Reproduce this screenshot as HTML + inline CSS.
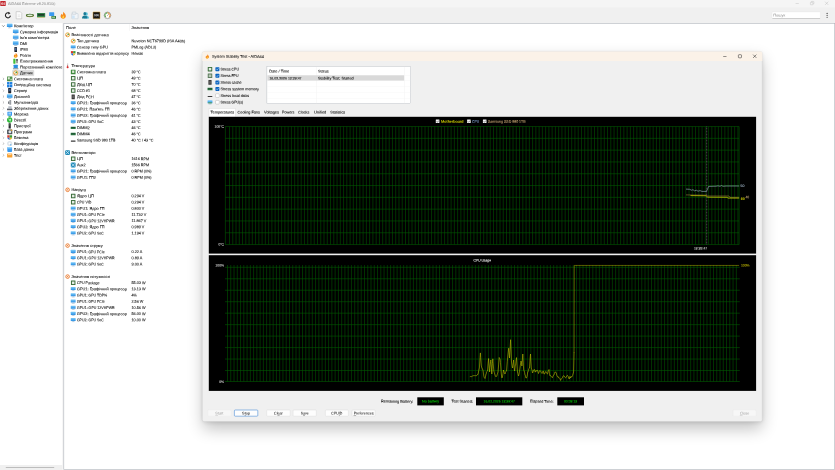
<!DOCTYPE html>
<html lang="uk"><head><meta charset="utf-8"><title>AIDA64 Extreme</title>
<style>
html,body{margin:0;padding:0;background:#fff}
body{width:835px;height:470px;position:relative;overflow:hidden;font-family:"Liberation Sans",sans-serif}
svg{position:absolute;left:0;top:0;display:block;will-change:transform}
#shadow{position:absolute;left:203px;top:52px;width:559px;height:369px;border-radius:2px;background:#f0f0f0;box-shadow:0 7.5px 16px rgba(0,0,0,0.24),0 1px 5px rgba(0,0,0,0.13)}
</style></head><body>
<svg width="835" height="470" viewBox="0 0 835 470" font-family="Liberation Sans, sans-serif">
<defs><linearGradient id="gm" x1="0" y1="0" x2="0" y2="1"><stop offset="0" stop-color="#7ccaf8"/><stop offset="1" stop-color="#2a8fe4"/></linearGradient><clipPath id="ctree"><rect x="0" y="23.2" width="62.4" height="442"/></clipPath></defs>
<rect x="0.00" y="0.00" width="835.00" height="7.20" fill="#f5f5f5"/>
<rect x="0.00" y="7.20" width="835.00" height="16.00" fill="#f0f0f0"/>
<rect x="0.30" y="1.00" width="5.40" height="5.10" fill="#c2262c" rx="0.4"/>
<text x="3.00" y="4.74" font-size="3.4" fill="#fff" text-anchor="middle" font-weight="bold" letter-spacing="-0.2" transform="rotate(0.1 3.00 4.74)">64</text>
<text x="8.00" y="5.06" font-size="3.9" fill="#8e8e8e" stroke="#8e8e8e" stroke-width="0.03" textLength="47.32" lengthAdjust="spacingAndGlyphs" transform="rotate(0.1 8.00 5.06)">AIDA64 Extreme v8.20.8100</text>
<rect x="795.60" y="3.25" width="3.20" height="0.38" fill="#b4b4b4"/>
<rect x="810.40" y="2.30" width="2.50" height="2.50" fill="none" rx="0.5" stroke="#b4b4b4" stroke-width="0.38"/>
<path d="M811.4 2.3V1.9Q811.4 1.4 811.9 1.4H813.3Q813.9 1.4 813.9 2.0V3.3Q813.9 3.8 813.4 3.8H812.9" fill="none" stroke="#b4b4b4" stroke-width="0.38"/>
<path d="M825.1 1.7L828.3 4.9M828.3 1.7L825.1 4.9" fill="none" stroke="#b4b4b4" stroke-width="0.4"/>
<path d="M10.40 15.65 A2.5 2.5 0 1 1 8.90 13.05" fill="none" stroke="#222" stroke-width="1.05"/>
<path d="M8.40 11.75 L10.50 13.15 L8.30 14.45Z" fill="#222"/>
<path d="M16.15 11.65H20.15L21.75 13.25V18.85H16.15Z" fill="#fbfbfb" stroke="#b0b0b0" stroke-width="0.5"/>
<rect x="17.65" y="14.75" width="2.60" height="0.45" fill="#cfcfcf"/>
<rect x="17.65" y="15.95" width="2.60" height="0.45" fill="#cfcfcf"/>
<ellipse cx="29.90" cy="15.60" rx="3.95" ry="1.55" fill="#c8a040"/>
<ellipse cx="29.90" cy="15.35" rx="3.95" ry="1.55" fill="#3a6a30"/>
<ellipse cx="29.90" cy="15.35" rx="2.90" ry="0.85" fill="#e4ecd4"/>
<rect x="37.00" y="12.95" width="8.20" height="4.40" fill="#3a8a50" rx="0.3"/>
<rect x="37.80" y="13.85" width="6.60" height="1.90" fill="#1d3d28"/>
<rect x="37.40" y="17.35" width="7.40" height="0.60" fill="#c8b060"/>
<rect x="49.20" y="12.15" width="5.00" height="3.90" fill="#3a9af0" rx="0.4"/>
<rect x="51.40" y="15.95" width="4.60" height="2.90" fill="#2f6f3a" rx="0.3"/>
<rect x="52.10" y="16.55" width="2.90" height="1.50" fill="#8fc890"/>
<g transform="translate(59.50 11.45) scale(0.740)"><path d="M5 0.3 C6.5 2.5 8.8 3.6 8.6 6.5 C8.5 8.6 6.8 9.8 5 9.8 C3 9.8 1.3 8.5 1.4 6.3 C1.5 4.8 2.5 4.2 2.9 3 C3.6 3.8 3.8 4.4 4 5 C4.8 3.6 5.2 2 5 0.3Z" fill="#f58a1f"/><path d="M5 5.2 C6 6.3 6.6 7.2 6.3 8.3 C6.1 9.2 5.5 9.6 5 9.6 C4.3 9.6 3.7 9.1 3.7 8.2 C3.7 7 4.6 6.5 5 5.2Z" fill="#ffd23c"/></g>
<rect x="71.70" y="13.55" width="6.40" height="5.20" fill="#f2f5f8" rx="0.4" stroke="#b4c0cc" stroke-width="0.4"/>
<rect x="72.10" y="15.55" width="2.60" height="2.80" fill="#cfe4f6"/>
<rect x="72.30" y="12.05" width="3.60" height="2.20" fill="#eef1f4" rx="0.2" stroke="#b0bac4" stroke-width="0.4"/>
<ellipse cx="86.30" cy="14.05" rx="1.50" ry="1.70" fill="#5ac0d8"/>
<path d="M83.80 18.55Q83.80 15.75 86.40 15.75Q89.00 15.75 89.00 18.55Z" fill="#5ac0d8"/>
<ellipse cx="84.80" cy="13.65" rx="1.40" ry="1.60" fill="#1a7a94"/>
<path d="M82.00 18.55Q82.00 15.45 84.80 15.45Q87.40 15.45 87.40 18.55Z" fill="#1a7a94"/>
<rect x="93.00" y="11.95" width="7.00" height="6.80" fill="#141414" rx="0.3" stroke="#d8a23a" stroke-width="0.5"/>
<text x="96.50" y="16.36" font-size="3.0" fill="#f4f4f4" text-anchor="middle" font-weight="bold" transform="rotate(0.1 96.50 16.36)">000</text>
<ellipse cx="107.50" cy="15.35" rx="3.30" ry="3.30" fill="#fffefa" stroke="#4a4a4a" stroke-width="0.45"/>
<path d="M105.80 17.25A2.55 2.55 0 0 1 107.50 12.80" fill="none" stroke="#3fa03a" stroke-width="1.0"/>
<path d="M107.50 12.80A2.55 2.55 0 0 1 109.20 17.25" fill="none" stroke="#e8862a" stroke-width="1.0"/>
<path d="M107.30 15.75L108.80 14.25" fill="none" stroke="#444" stroke-width="0.5"/>
<rect x="772.10" y="11.90" width="48.30" height="6.60" fill="#fff" rx="0.5" stroke="#e4e4e4" stroke-width="0.3"/>
<rect x="772.40" y="18.20" width="47.70" height="0.40" fill="#9a9a9a"/>
<text x="773.20" y="16.51" font-size="3.9" fill="#8a8a8a" textLength="12.18" lengthAdjust="spacingAndGlyphs" transform="rotate(0.1 773.20 16.51)">Пошук</text>
<ellipse cx="827.10" cy="13.40" rx="0.55" ry="0.55" fill="#222"/>
<ellipse cx="827.10" cy="15.35" rx="0.55" ry="0.55" fill="#222"/>
<ellipse cx="827.10" cy="17.30" rx="0.55" ry="0.55" fill="#222"/>
<rect x="0.00" y="23.20" width="62.40" height="446.80" fill="#fff"/>
<rect x="62.40" y="23.20" width="1.20" height="446.80" fill="#f0f0f0"/>
<rect x="63.80" y="23.50" width="770.90" height="446.00" fill="#fff" stroke="#aeb2ba" stroke-width="0.6"/>
<rect x="0.00" y="465.00" width="62.40" height="5.00" fill="#f0f0f0"/>
<rect x="5.70" y="467.15" width="48.60" height="0.70" fill="#8a8a8a" rx="0.35"/>
<g clip-path="url(#ctree)">
<path d="M2.30 25.45L3.40 26.55L4.50 25.45" fill="none" stroke="#333" stroke-width="0.6"/>
<rect x="6.90" y="23.61" width="5.60" height="3.47" fill="url(#gm)" rx="0.3"/>
<rect x="9.14" y="27.08" width="1.12" height="0.67" fill="#9ab8d0"/>
<rect x="8.02" y="27.64" width="3.36" height="0.56" fill="#8fb0cc"/>
<text x="13.90" y="27.26" font-size="3.9" fill="#1a1a1a" stroke="#1a1a1a" stroke-width="0.09" textLength="19.75" lengthAdjust="spacingAndGlyphs" transform="rotate(0.1 13.90 27.26)">Комп'ютер</text>
<rect x="12.90" y="29.50" width="5.60" height="3.47" fill="url(#gm)" rx="0.3"/>
<rect x="15.14" y="32.97" width="1.12" height="0.67" fill="#9ab8d0"/>
<rect x="14.02" y="33.53" width="3.36" height="0.56" fill="#8fb0cc"/>
<text x="20.00" y="33.14" font-size="3.9" fill="#1a1a1a" stroke="#1a1a1a" stroke-width="0.09" textLength="38.16" lengthAdjust="spacingAndGlyphs" transform="rotate(0.1 20.00 33.14)">Сумарна інформація</text>
<rect x="12.90" y="35.38" width="5.60" height="3.47" fill="url(#gm)" rx="0.3"/>
<rect x="15.14" y="38.85" width="1.12" height="0.67" fill="#9ab8d0"/>
<rect x="14.02" y="39.41" width="3.36" height="0.56" fill="#8fb0cc"/>
<text x="20.00" y="39.03" font-size="3.9" fill="#1a1a1a" stroke="#1a1a1a" stroke-width="0.09" textLength="29.30" lengthAdjust="spacingAndGlyphs" transform="rotate(0.1 20.00 39.03)">Ім'я комп'ютера</text>
<rect x="12.90" y="41.26" width="5.60" height="3.47" fill="url(#gm)" rx="0.3"/>
<rect x="15.14" y="44.74" width="1.12" height="0.67" fill="#9ab8d0"/>
<rect x="14.02" y="45.30" width="3.36" height="0.56" fill="#8fb0cc"/>
<text x="20.00" y="44.91" font-size="3.9" fill="#1a1a1a" stroke="#1a1a1a" stroke-width="0.09" textLength="7.27" lengthAdjust="spacingAndGlyphs" transform="rotate(0.1 20.00 44.91)">DMI</text>
<rect x="14.40" y="46.89" width="2.60" height="5.00" fill="#20242c" rx="0.5"/>
<rect x="14.85" y="47.69" width="1.70" height="2.80" fill="#4a6a98"/>
<text x="20.00" y="50.80" font-size="3.9" fill="#1a1a1a" stroke="#1a1a1a" stroke-width="0.09" textLength="7.77" lengthAdjust="spacingAndGlyphs" transform="rotate(0.1 20.00 50.80)">IPMI</text>
<g transform="translate(13.10 52.67) scale(0.520)"><path d="M5 0.3 C6.5 2.5 8.8 3.6 8.6 6.5 C8.5 8.6 6.8 9.8 5 9.8 C3 9.8 1.3 8.5 1.4 6.3 C1.5 4.8 2.5 4.2 2.9 3 C3.6 3.8 3.8 4.4 4 5 C4.8 3.6 5.2 2 5 0.3Z" fill="#f58a1f"/><path d="M5 5.2 C6 6.3 6.6 7.2 6.3 8.3 C6.1 9.2 5.5 9.6 5 9.6 C4.3 9.6 3.7 9.1 3.7 8.2 C3.7 7 4.6 6.5 5 5.2Z" fill="#ffd23c"/></g>
<text x="20.00" y="56.68" font-size="3.9" fill="#1a1a1a" stroke="#1a1a1a" stroke-width="0.09" textLength="11.05" lengthAdjust="spacingAndGlyphs" transform="rotate(0.1 20.00 56.68)">Розгін</text>
<rect x="13.30" y="58.66" width="2.20" height="5.00" fill="#3fbe3a" rx="0.3"/>
<rect x="16.55" y="59.46" width="0.90" height="3.80" fill="#333"/>
<ellipse cx="17.00" cy="59.86" rx="0.80" ry="0.90" fill="#333"/>
<text x="20.00" y="62.57" font-size="3.9" fill="#1a1a1a" stroke="#1a1a1a" stroke-width="0.09" textLength="33.02" lengthAdjust="spacingAndGlyphs" transform="rotate(0.1 20.00 62.57)">Електроживлення</text>
<rect x="13.60" y="64.85" width="4.20" height="3.20" fill="#2b8fe0" rx="0.3"/>
<rect x="12.90" y="68.34" width="5.60" height="0.80" fill="#7a8a98" rx="0.3"/>
<text x="20.00" y="68.45" font-size="3.9" fill="#1a1a1a" stroke="#1a1a1a" stroke-width="0.09" textLength="44.91" lengthAdjust="spacingAndGlyphs" transform="rotate(0.1 20.00 68.45)">Портативний комп'ютер</text>
<rect x="12.50" y="70.23" width="21.40" height="5.50" fill="#dcdcdc" rx="0.4" stroke="#c6c6c6" stroke-width="0.3"/>
<ellipse cx="15.70" cy="72.93" rx="2.10" ry="2.10" fill="#fffdf6" stroke="#e89a20" stroke-width="0.8"/>
<ellipse cx="16.30" cy="72.43" rx="0.85" ry="0.85" fill="#4a9a3a"/>
<ellipse cx="14.90" cy="73.73" rx="0.60" ry="0.60" fill="#d85a2a"/>
<text x="20.00" y="74.34" font-size="3.9" fill="#1a1a1a" stroke="#1a1a1a" stroke-width="0.09" textLength="12.85" lengthAdjust="spacingAndGlyphs" transform="rotate(0.1 20.00 74.34)">Датчик</text>
<path d="M2.90 77.82L4.00 78.92L2.90 80.02" fill="none" stroke="#8c8c8c" stroke-width="0.55"/>
<rect x="7.00" y="76.42" width="5.40" height="4.80" fill="#4f8f4a" rx="0.3"/>
<rect x="7.80" y="77.22" width="2.00" height="2.20" fill="#e0ecd8"/>
<rect x="10.40" y="78.82" width="1.40" height="1.60" fill="#c8dcc0"/>
<text x="13.90" y="80.22" font-size="3.9" fill="#1a1a1a" stroke="#1a1a1a" stroke-width="0.09" textLength="29.00" lengthAdjust="spacingAndGlyphs" transform="rotate(0.1 13.90 80.22)">Системна плата</text>
<path d="M2.90 83.70L4.00 84.80L2.90 85.90" fill="none" stroke="#8c8c8c" stroke-width="0.55"/>
<rect x="7.05" y="82.05" width="2.50" height="2.50" fill="#1f7fe0"/>
<rect x="7.05" y="84.85" width="2.50" height="2.50" fill="#1f7fe0"/>
<rect x="9.85" y="82.05" width="2.50" height="2.50" fill="#1f7fe0"/>
<rect x="9.85" y="84.85" width="2.50" height="2.50" fill="#1f7fe0"/>
<text x="13.90" y="86.11" font-size="3.9" fill="#1a1a1a" stroke="#1a1a1a" stroke-width="0.09" textLength="36.97" lengthAdjust="spacingAndGlyphs" transform="rotate(0.1 13.90 86.11)">Операційна система</text>
<path d="M2.90 89.59L4.00 90.69L2.90 91.79" fill="none" stroke="#8c8c8c" stroke-width="0.55"/>
<rect x="8.20" y="87.99" width="3.00" height="5.20" fill="#20242c" rx="0.5"/>
<rect x="8.75" y="88.89" width="1.90" height="2.40" fill="#3a5a8a"/>
<text x="13.90" y="91.99" font-size="3.9" fill="#1a1a1a" stroke="#1a1a1a" stroke-width="0.09" textLength="13.25" lengthAdjust="spacingAndGlyphs" transform="rotate(0.1 13.90 91.99)">Сервер</text>
<path d="M2.90 95.47L4.00 96.57L2.90 97.67" fill="none" stroke="#8c8c8c" stroke-width="0.55"/>
<rect x="6.90" y="94.23" width="5.60" height="3.47" fill="url(#gm)" rx="0.3"/>
<rect x="9.14" y="97.70" width="1.12" height="0.67" fill="#9ab8d0"/>
<rect x="8.02" y="98.26" width="3.36" height="0.56" fill="#8fb0cc"/>
<text x="13.90" y="97.88" font-size="3.9" fill="#1a1a1a" stroke="#1a1a1a" stroke-width="0.09" textLength="15.80" lengthAdjust="spacingAndGlyphs" transform="rotate(0.1 13.90 97.88)">Дисплей</text>
<path d="M2.90 101.36L4.00 102.46L2.90 103.56" fill="none" stroke="#8c8c8c" stroke-width="0.55"/>
<rect x="9.40" y="99.96" width="1.80" height="4.80" fill="#9a9ea4" rx="0.3"/>
<rect x="8.10" y="101.46" width="1.20" height="2.40" fill="#6a6e74"/>
<text x="13.90" y="103.76" font-size="3.9" fill="#1a1a1a" stroke="#1a1a1a" stroke-width="0.09" textLength="24.24" lengthAdjust="spacingAndGlyphs" transform="rotate(0.1 13.90 103.76)">Мультимедіа</text>
<path d="M2.90 107.24L4.00 108.34L2.90 109.44" fill="none" stroke="#8c8c8c" stroke-width="0.55"/>
<rect x="7.00" y="108.54" width="5.40" height="1.80" fill="#5a5f68" rx="0.4"/>
<rect x="8.30" y="106.14" width="3.40" height="2.40" fill="#b8bec6" rx="0.3"/>
<text x="13.90" y="109.65" font-size="3.9" fill="#1a1a1a" stroke="#1a1a1a" stroke-width="0.09" textLength="34.49" lengthAdjust="spacingAndGlyphs" transform="rotate(0.1 13.90 109.65)">Збереження даних</text>
<path d="M2.90 113.13L4.00 114.23L2.90 115.33" fill="none" stroke="#8c8c8c" stroke-width="0.55"/>
<rect x="7.40" y="111.63" width="4.60" height="4.00" fill="#3a9af0" rx="0.3"/>
<rect x="8.40" y="112.53" width="2.60" height="2.00" fill="#9fd0f8"/>
<rect x="8.50" y="115.88" width="2.40" height="0.90" fill="#3aa84a"/>
<text x="13.90" y="115.53" font-size="3.9" fill="#1a1a1a" stroke="#1a1a1a" stroke-width="0.09" textLength="14.60" lengthAdjust="spacingAndGlyphs" transform="rotate(0.1 13.90 115.53)">Мережа</text>
<path d="M2.90 119.01L4.00 120.11L2.90 121.21" fill="none" stroke="#8c8c8c" stroke-width="0.55"/>
<ellipse cx="9.70" cy="120.01" rx="2.70" ry="2.70" fill="#2fb83a"/>
<path d="M8.50 119.01L10.90 121.21M10.90 119.01L9.70 120.11" fill="none" stroke="#f0fff0" stroke-width="0.9"/>
<text x="13.90" y="121.42" font-size="3.9" fill="#1a1a1a" stroke="#1a1a1a" stroke-width="0.09" textLength="12.49" lengthAdjust="spacingAndGlyphs" transform="rotate(0.1 13.90 121.42)">DirectX</text>
<path d="M2.90 124.90L4.00 126.00L2.90 127.10" fill="none" stroke="#8c8c8c" stroke-width="0.55"/>
<rect x="8.60" y="123.30" width="2.20" height="5.20" fill="#2a2a30" rx="0.3"/>
<rect x="9.20" y="124.40" width="1.00" height="1.00" fill="#5a9a5a"/>
<text x="13.90" y="127.30" font-size="3.9" fill="#1a1a1a" stroke="#1a1a1a" stroke-width="0.09" textLength="16.72" lengthAdjust="spacingAndGlyphs" transform="rotate(0.1 13.90 127.30)">Пристрої</text>
<path d="M2.90 130.78L4.00 131.88L2.90 132.98" fill="none" stroke="#8c8c8c" stroke-width="0.55"/>
<rect x="7.10" y="129.38" width="5.20" height="4.80" fill="#4a5058" rx="0.5"/>
<ellipse cx="9.90" cy="131.78" rx="1.50" ry="1.50" fill="#e0e4e8"/>
<rect x="10.80" y="129.48" width="1.40" height="1.40" fill="#e8a030"/>
<text x="13.90" y="133.19" font-size="3.9" fill="#1a1a1a" stroke="#1a1a1a" stroke-width="0.09" textLength="18.39" lengthAdjust="spacingAndGlyphs" transform="rotate(0.1 13.90 133.19)">Програми</text>
<path d="M2.90 136.67L4.00 137.77L2.90 138.87" fill="none" stroke="#8c8c8c" stroke-width="0.55"/>
<path d="M7.30 135.27H9.70V137.67H7.30Z" fill="#d83a2a"/>
<path d="M9.70 135.27H12.10V137.67H9.70Z" fill="#3a9a3a"/>
<path d="M7.30 137.67H9.70V140.07Q7.30 139.11 7.30 137.67Z" fill="#2a6ad8"/>
<path d="M9.70 137.67H12.10Q12.10 139.11 9.70 140.07Z" fill="#e8b82a"/>
<text x="13.90" y="139.07" font-size="3.9" fill="#1a1a1a" stroke="#1a1a1a" stroke-width="0.09" textLength="14.64" lengthAdjust="spacingAndGlyphs" transform="rotate(0.1 13.90 139.07)">Безпека</text>
<path d="M2.90 142.55L4.00 143.65L2.90 144.75" fill="none" stroke="#8c8c8c" stroke-width="0.55"/>
<ellipse cx="9.70" cy="143.55" rx="2.60" ry="2.60" fill="#dde4ea"/>
<ellipse cx="9.70" cy="143.55" rx="1.10" ry="1.10" fill="#fff"/>
<ellipse cx="10.70" cy="144.75" rx="0.90" ry="0.90" fill="#8fc0e8"/>
<text x="13.90" y="144.96" font-size="3.9" fill="#1a1a1a" stroke="#1a1a1a" stroke-width="0.09" textLength="24.28" lengthAdjust="spacingAndGlyphs" transform="rotate(0.1 13.90 144.96)">Конфігурація</text>
<path d="M2.90 148.44L4.00 149.54L2.90 150.64" fill="none" stroke="#8c8c8c" stroke-width="0.55"/>
<rect x="7.30" y="146.94" width="4.80" height="5.00" fill="#3a9af0" rx="0.9"/>
<rect x="7.30" y="147.04" width="4.80" height="1.40" fill="#8fd0fa" rx="0.7"/>
<text x="13.90" y="150.84" font-size="3.9" fill="#1a1a1a" stroke="#1a1a1a" stroke-width="0.09" textLength="20.31" lengthAdjust="spacingAndGlyphs" transform="rotate(0.1 13.90 150.84)">База даних</text>
<path d="M2.90 154.32L4.00 155.42L2.90 156.52" fill="none" stroke="#8c8c8c" stroke-width="0.55"/>
<rect x="7.10" y="153.52" width="5.20" height="4.00" fill="#f8a030" rx="0.5"/>
<rect x="8.00" y="154.37" width="3.40" height="0.70" fill="#fff0d8"/>
<text x="13.90" y="156.73" font-size="3.9" fill="#1a1a1a" stroke="#1a1a1a" stroke-width="0.09" textLength="7.76" lengthAdjust="spacingAndGlyphs" transform="rotate(0.1 13.90 156.73)">Тест</text>
</g>
<text x="66.10" y="28.91" font-size="3.9" fill="#1a1a1a" stroke="#1a1a1a" stroke-width="0.09" textLength="9.66" lengthAdjust="spacingAndGlyphs" transform="rotate(0.1 66.10 28.91)">Поле</text>
<text x="131.60" y="28.91" font-size="3.9" fill="#1a1a1a" stroke="#1a1a1a" stroke-width="0.09" textLength="17.63" lengthAdjust="spacingAndGlyphs" transform="rotate(0.1 131.60 28.91)">Значення</text>
<rect x="129.60" y="24.20" width="0.30" height="6.60" fill="#e4e4e4"/>
<ellipse cx="67.60" cy="34.80" rx="2.00" ry="2.00" fill="#fffdf6" stroke="#e89a20" stroke-width="0.8"/>
<ellipse cx="68.18" cy="34.32" rx="0.82" ry="0.82" fill="#4a9a3a"/>
<ellipse cx="66.83" cy="35.57" rx="0.58" ry="0.58" fill="#d85a2a"/>
<text x="71.40" y="36.11" font-size="3.9" fill="#1a1a1a" stroke="#1a1a1a" stroke-width="0.09" textLength="37.17" lengthAdjust="spacingAndGlyphs" transform="rotate(0.1 71.40 36.11)">Властивості датчика</text>
<ellipse cx="73.20" cy="41.00" rx="2.00" ry="2.00" fill="#fffdf6" stroke="#e89a20" stroke-width="0.8"/>
<ellipse cx="73.78" cy="40.52" rx="0.82" ry="0.82" fill="#4a9a3a"/>
<ellipse cx="72.43" cy="41.77" rx="0.58" ry="0.58" fill="#d85a2a"/>
<text x="76.90" y="42.31" font-size="3.9" fill="#1a1a1a" stroke="#1a1a1a" stroke-width="0.09" textLength="22.06" lengthAdjust="spacingAndGlyphs" transform="rotate(0.1 76.90 42.31)">Тип датчика</text>
<text x="131.50" y="42.31" font-size="3.9" fill="#1a1a1a" stroke="#1a1a1a" stroke-width="0.09" textLength="53.72" lengthAdjust="spacingAndGlyphs" transform="rotate(0.1 131.50 42.31)">Nuvoton NCT6799D  (ISA A40h)</text>
<rect x="70.75" y="45.24" width="4.90" height="3.04" fill="url(#gm)" rx="0.3"/>
<rect x="72.71" y="48.28" width="0.98" height="0.59" fill="#9ab8d0"/>
<rect x="71.73" y="48.77" width="2.94" height="0.49" fill="#8fb0cc"/>
<text x="76.90" y="48.51" font-size="3.9" fill="#1a1a1a" stroke="#1a1a1a" stroke-width="0.09" textLength="31.04" lengthAdjust="spacingAndGlyphs" transform="rotate(0.1 76.90 48.51)">Сенсор типу GPU</text>
<text x="131.50" y="48.51" font-size="3.9" fill="#1a1a1a" stroke="#1a1a1a" stroke-width="0.09" textLength="24.72" lengthAdjust="spacingAndGlyphs" transform="rotate(0.1 131.50 48.51)">PMLog  (ADL2)</text>
<path d="M70.90 51.10H73.20V53.40H70.90Z" fill="#d83a2a"/>
<path d="M73.20 51.10H75.50V53.40H73.20Z" fill="#3a9a3a"/>
<path d="M70.90 53.40H73.20V55.70Q70.90 54.78 70.90 53.40Z" fill="#2a6ad8"/>
<path d="M73.20 53.40H75.50Q75.50 54.78 73.20 55.70Z" fill="#e8b82a"/>
<text x="76.90" y="54.71" font-size="3.9" fill="#1a1a1a" stroke="#1a1a1a" stroke-width="0.09" textLength="52.03" lengthAdjust="spacingAndGlyphs" transform="rotate(0.1 76.90 54.71)">Виявлено відкриття корпусу</text>
<text x="131.50" y="54.71" font-size="3.9" fill="#1a1a1a" stroke="#1a1a1a" stroke-width="0.09" textLength="11.41" lengthAdjust="spacingAndGlyphs" transform="rotate(0.1 131.50 54.71)">Немає</text>
<rect x="66.95" y="63.20" width="1.30" height="4.20" fill="#d0d0d0" rx="0.6"/>
<ellipse cx="67.60" cy="67.30" rx="1.00" ry="1.00" fill="#d82a2a"/>
<rect x="67.35" y="65.10" width="0.50" height="2.00" fill="#d82a2a"/>
<text x="71.40" y="67.11" font-size="3.9" fill="#1a1a1a" stroke="#1a1a1a" stroke-width="0.09" textLength="23.77" lengthAdjust="spacingAndGlyphs" transform="rotate(0.1 71.40 67.11)">Температури</text>
<rect x="70.85" y="69.75" width="4.70" height="4.50" fill="#3f8a3f" rx="0.3"/>
<rect x="72.10" y="70.50" width="2.20" height="2.40" fill="#e0ead8"/>
<text x="76.90" y="73.31" font-size="3.9" fill="#1a1a1a" stroke="#1a1a1a" stroke-width="0.09" textLength="29.00" lengthAdjust="spacingAndGlyphs" transform="rotate(0.1 76.90 73.31)">Системна плата</text>
<text x="131.50" y="73.31" font-size="3.9" fill="#1a1a1a" stroke="#1a1a1a" stroke-width="0.09" textLength="9.15" lengthAdjust="spacingAndGlyphs" transform="rotate(0.1 131.50 73.31)">39 °C</text>
<rect x="70.95" y="75.95" width="4.50" height="4.50" fill="#3c6e3c" rx="0.3"/>
<rect x="71.94" y="76.94" width="2.52" height="2.52" fill="#e4ece4"/>
<text x="76.90" y="79.51" font-size="3.9" fill="#1a1a1a" stroke="#1a1a1a" stroke-width="0.09" textLength="5.97" lengthAdjust="spacingAndGlyphs" transform="rotate(0.1 76.90 79.51)">ЦП</text>
<text x="131.50" y="79.51" font-size="3.9" fill="#1a1a1a" stroke="#1a1a1a" stroke-width="0.09" textLength="9.15" lengthAdjust="spacingAndGlyphs" transform="rotate(0.1 131.50 79.51)">49 °C</text>
<rect x="70.95" y="82.15" width="4.50" height="4.50" fill="#3c6e3c" rx="0.3"/>
<rect x="71.94" y="83.14" width="2.52" height="2.52" fill="#e4ece4"/>
<text x="76.90" y="85.71" font-size="3.9" fill="#1a1a1a" stroke="#1a1a1a" stroke-width="0.09" textLength="15.43" lengthAdjust="spacingAndGlyphs" transform="rotate(0.1 76.90 85.71)">Діод ЦП</text>
<text x="131.50" y="85.71" font-size="3.9" fill="#1a1a1a" stroke="#1a1a1a" stroke-width="0.09" textLength="9.15" lengthAdjust="spacingAndGlyphs" transform="rotate(0.1 131.50 85.71)">70 °C</text>
<rect x="70.95" y="88.35" width="4.50" height="4.50" fill="#3c6e3c" rx="0.3"/>
<rect x="71.94" y="89.34" width="2.52" height="2.52" fill="#e4ece4"/>
<text x="76.90" y="91.91" font-size="3.9" fill="#1a1a1a" stroke="#1a1a1a" stroke-width="0.09" textLength="13.04" lengthAdjust="spacingAndGlyphs" transform="rotate(0.1 76.90 91.91)">CCD #1</text>
<text x="131.50" y="91.91" font-size="3.9" fill="#1a1a1a" stroke="#1a1a1a" stroke-width="0.09" textLength="9.15" lengthAdjust="spacingAndGlyphs" transform="rotate(0.1 131.50 91.91)">68 °C</text>
<rect x="71.60" y="94.40" width="3.20" height="4.80" fill="#3a3a3a" rx="0.3"/>
<rect x="72.50" y="95.60" width="1.40" height="2.40" fill="#6a6a6a"/>
<text x="76.90" y="98.11" font-size="3.9" fill="#1a1a1a" stroke="#1a1a1a" stroke-width="0.09" textLength="16.84" lengthAdjust="spacingAndGlyphs" transform="rotate(0.1 76.90 98.11)">Діод PCH</text>
<text x="131.50" y="98.11" font-size="3.9" fill="#1a1a1a" stroke="#1a1a1a" stroke-width="0.09" textLength="9.15" lengthAdjust="spacingAndGlyphs" transform="rotate(0.1 131.50 98.11)">47 °C</text>
<rect x="70.75" y="101.04" width="4.90" height="3.04" fill="url(#gm)" rx="0.3"/>
<rect x="72.71" y="104.08" width="0.98" height="0.59" fill="#9ab8d0"/>
<rect x="71.73" y="104.57" width="2.94" height="0.49" fill="#8fb0cc"/>
<text x="76.90" y="104.31" font-size="3.9" fill="#1a1a1a" stroke="#1a1a1a" stroke-width="0.09" textLength="49.97" lengthAdjust="spacingAndGlyphs" transform="rotate(0.1 76.90 104.31)">GPU1: Графічний процесор</text>
<text x="131.50" y="104.31" font-size="3.9" fill="#1a1a1a" stroke="#1a1a1a" stroke-width="0.09" textLength="9.15" lengthAdjust="spacingAndGlyphs" transform="rotate(0.1 131.50 104.31)">36 °C</text>
<rect x="70.75" y="107.24" width="4.90" height="3.04" fill="url(#gm)" rx="0.3"/>
<rect x="72.71" y="110.28" width="0.98" height="0.59" fill="#9ab8d0"/>
<rect x="71.73" y="110.77" width="2.94" height="0.49" fill="#8fb0cc"/>
<text x="76.90" y="110.51" font-size="3.9" fill="#1a1a1a" stroke="#1a1a1a" stroke-width="0.09" textLength="32.66" lengthAdjust="spacingAndGlyphs" transform="rotate(0.1 76.90 110.51)">GPU1: Пам'ять ГП</text>
<text x="131.50" y="110.51" font-size="3.9" fill="#1a1a1a" stroke="#1a1a1a" stroke-width="0.09" textLength="9.15" lengthAdjust="spacingAndGlyphs" transform="rotate(0.1 131.50 110.51)">46 °C</text>
<rect x="70.75" y="113.44" width="4.90" height="3.04" fill="url(#gm)" rx="0.3"/>
<rect x="72.71" y="116.48" width="0.98" height="0.59" fill="#9ab8d0"/>
<rect x="71.73" y="116.97" width="2.94" height="0.49" fill="#8fb0cc"/>
<text x="76.90" y="116.71" font-size="3.9" fill="#1a1a1a" stroke="#1a1a1a" stroke-width="0.09" textLength="49.97" lengthAdjust="spacingAndGlyphs" transform="rotate(0.1 76.90 116.71)">GPU2: Графічний процесор</text>
<text x="131.50" y="116.71" font-size="3.9" fill="#1a1a1a" stroke="#1a1a1a" stroke-width="0.09" textLength="9.15" lengthAdjust="spacingAndGlyphs" transform="rotate(0.1 131.50 116.71)">41 °C</text>
<rect x="70.75" y="119.64" width="4.90" height="3.04" fill="url(#gm)" rx="0.3"/>
<rect x="72.71" y="122.68" width="0.98" height="0.59" fill="#9ab8d0"/>
<rect x="71.73" y="123.17" width="2.94" height="0.49" fill="#8fb0cc"/>
<text x="76.90" y="122.91" font-size="3.9" fill="#1a1a1a" stroke="#1a1a1a" stroke-width="0.09" textLength="26.95" lengthAdjust="spacingAndGlyphs" transform="rotate(0.1 76.90 122.91)">GPU2: GPU SoC</text>
<text x="131.50" y="122.91" font-size="3.9" fill="#1a1a1a" stroke="#1a1a1a" stroke-width="0.09" textLength="9.15" lengthAdjust="spacingAndGlyphs" transform="rotate(0.1 131.50 122.91)">43 °C</text>
<rect x="70.70" y="126.65" width="5.00" height="2.30" fill="#2f7a46" rx="0.2"/>
<rect x="71.20" y="127.15" width="4.00" height="0.90" fill="#1d4d30"/>
<text x="76.90" y="129.11" font-size="3.9" fill="#1a1a1a" stroke="#1a1a1a" stroke-width="0.09" textLength="12.88" lengthAdjust="spacingAndGlyphs" transform="rotate(0.1 76.90 129.11)">DIMM2</text>
<text x="131.50" y="129.11" font-size="3.9" fill="#1a1a1a" stroke="#1a1a1a" stroke-width="0.09" textLength="9.15" lengthAdjust="spacingAndGlyphs" transform="rotate(0.1 131.50 129.11)">46 °C</text>
<rect x="70.70" y="132.85" width="5.00" height="2.30" fill="#2f7a46" rx="0.2"/>
<rect x="71.20" y="133.35" width="4.00" height="0.90" fill="#1d4d30"/>
<text x="76.90" y="135.31" font-size="3.9" fill="#1a1a1a" stroke="#1a1a1a" stroke-width="0.09" textLength="12.88" lengthAdjust="spacingAndGlyphs" transform="rotate(0.1 76.90 135.31)">DIMM4</text>
<text x="131.50" y="135.31" font-size="3.9" fill="#1a1a1a" stroke="#1a1a1a" stroke-width="0.09" textLength="9.15" lengthAdjust="spacingAndGlyphs" transform="rotate(0.1 131.50 135.31)">46 °C</text>
<rect x="70.90" y="140.55" width="4.60" height="1.10" fill="#3a3a3a" rx="0.2"/>
<text x="76.90" y="141.51" font-size="3.9" fill="#1a1a1a" stroke="#1a1a1a" stroke-width="0.09" textLength="38.56" lengthAdjust="spacingAndGlyphs" transform="rotate(0.1 76.90 141.51)">Samsung SSD 980 1TB</text>
<text x="131.50" y="141.51" font-size="3.9" fill="#1a1a1a" stroke="#1a1a1a" stroke-width="0.09" textLength="21.96" lengthAdjust="spacingAndGlyphs" transform="rotate(0.1 131.50 141.51)">40 °C / 43 °C</text>
<rect x="65.20" y="150.20" width="4.80" height="4.80" fill="#1f8ab8" rx="1.0"/>
<path d="M66.00 151.00L69.20 154.20M69.20 151.00L66.00 154.20" fill="none" stroke="#cfeaf6" stroke-width="0.8"/>
<text x="71.40" y="153.91" font-size="3.9" fill="#1a1a1a" stroke="#1a1a1a" stroke-width="0.09" textLength="24.05" lengthAdjust="spacingAndGlyphs" transform="rotate(0.1 71.40 153.91)">Вентилятори</text>
<rect x="70.95" y="156.55" width="4.50" height="4.50" fill="#3c6e3c" rx="0.3"/>
<rect x="71.94" y="157.54" width="2.52" height="2.52" fill="#e4ece4"/>
<text x="76.90" y="160.11" font-size="3.9" fill="#1a1a1a" stroke="#1a1a1a" stroke-width="0.09" textLength="5.97" lengthAdjust="spacingAndGlyphs" transform="rotate(0.1 76.90 160.11)">ЦП</text>
<text x="131.50" y="160.11" font-size="3.9" fill="#1a1a1a" stroke="#1a1a1a" stroke-width="0.09" textLength="17.51" lengthAdjust="spacingAndGlyphs" transform="rotate(0.1 131.50 160.11)">1616 RPM</text>
<rect x="70.80" y="162.60" width="4.80" height="4.80" fill="#1f8ab8" rx="1.0"/>
<path d="M71.60 163.40L74.80 166.60M74.80 163.40L71.60 166.60" fill="none" stroke="#cfeaf6" stroke-width="0.8"/>
<text x="76.90" y="166.31" font-size="3.9" fill="#1a1a1a" stroke="#1a1a1a" stroke-width="0.09" textLength="8.62" lengthAdjust="spacingAndGlyphs" transform="rotate(0.1 76.90 166.31)">Aux2</text>
<text x="131.50" y="166.31" font-size="3.9" fill="#1a1a1a" stroke="#1a1a1a" stroke-width="0.09" textLength="17.51" lengthAdjust="spacingAndGlyphs" transform="rotate(0.1 131.50 166.31)">1566 RPM</text>
<rect x="70.75" y="169.24" width="4.90" height="3.04" fill="url(#gm)" rx="0.3"/>
<rect x="72.71" y="172.28" width="0.98" height="0.59" fill="#9ab8d0"/>
<rect x="71.73" y="172.77" width="2.94" height="0.49" fill="#8fb0cc"/>
<text x="76.90" y="172.51" font-size="3.9" fill="#1a1a1a" stroke="#1a1a1a" stroke-width="0.09" textLength="49.97" lengthAdjust="spacingAndGlyphs" transform="rotate(0.1 76.90 172.51)">GPU1: Графічний процесор</text>
<text x="131.50" y="172.51" font-size="3.9" fill="#1a1a1a" stroke="#1a1a1a" stroke-width="0.09" textLength="19.92" lengthAdjust="spacingAndGlyphs" transform="rotate(0.1 131.50 172.51)">0 RPM  (0%)</text>
<rect x="70.75" y="175.44" width="4.90" height="3.04" fill="url(#gm)" rx="0.3"/>
<rect x="72.71" y="178.48" width="0.98" height="0.59" fill="#9ab8d0"/>
<rect x="71.73" y="178.97" width="2.94" height="0.49" fill="#8fb0cc"/>
<text x="76.90" y="178.71" font-size="3.9" fill="#1a1a1a" stroke="#1a1a1a" stroke-width="0.09" textLength="18.83" lengthAdjust="spacingAndGlyphs" transform="rotate(0.1 76.90 178.71)">GPU1: ГП2</text>
<text x="131.50" y="178.71" font-size="3.9" fill="#1a1a1a" stroke="#1a1a1a" stroke-width="0.09" textLength="19.92" lengthAdjust="spacingAndGlyphs" transform="rotate(0.1 131.50 178.71)">0 RPM  (0%)</text>
<ellipse cx="67.60" cy="189.80" rx="1.80" ry="1.80" fill="#fff8f0" stroke="#e8762a" stroke-width="0.9"/>
<ellipse cx="67.60" cy="189.80" rx="0.60" ry="0.60" fill="#e8762a"/>
<text x="71.40" y="191.11" font-size="3.9" fill="#1a1a1a" stroke="#1a1a1a" stroke-width="0.09" textLength="14.62" lengthAdjust="spacingAndGlyphs" transform="rotate(0.1 71.40 191.11)">Напруга</text>
<rect x="70.95" y="193.75" width="4.50" height="4.50" fill="#3c6e3c" rx="0.3"/>
<rect x="71.94" y="194.74" width="2.52" height="2.52" fill="#e4ece4"/>
<text x="76.90" y="197.31" font-size="3.9" fill="#1a1a1a" stroke="#1a1a1a" stroke-width="0.09" textLength="16.97" lengthAdjust="spacingAndGlyphs" transform="rotate(0.1 76.90 197.31)">Ядро ЦП</text>
<text x="131.50" y="197.31" font-size="3.9" fill="#1a1a1a" stroke="#1a1a1a" stroke-width="0.09" textLength="12.75" lengthAdjust="spacingAndGlyphs" transform="rotate(0.1 131.50 197.31)">0.294 V</text>
<rect x="70.95" y="199.95" width="4.50" height="4.50" fill="#3c6e3c" rx="0.3"/>
<rect x="71.94" y="200.94" width="2.52" height="2.52" fill="#e4ece4"/>
<text x="76.90" y="203.51" font-size="3.9" fill="#1a1a1a" stroke="#1a1a1a" stroke-width="0.09" textLength="14.55" lengthAdjust="spacingAndGlyphs" transform="rotate(0.1 76.90 203.51)">CPU VID</text>
<text x="131.50" y="203.51" font-size="3.9" fill="#1a1a1a" stroke="#1a1a1a" stroke-width="0.09" textLength="12.75" lengthAdjust="spacingAndGlyphs" transform="rotate(0.1 131.50 203.51)">0.294 V</text>
<rect x="70.75" y="206.44" width="4.90" height="3.04" fill="url(#gm)" rx="0.3"/>
<rect x="72.71" y="209.48" width="0.98" height="0.59" fill="#9ab8d0"/>
<rect x="71.73" y="209.97" width="2.94" height="0.49" fill="#8fb0cc"/>
<text x="76.90" y="209.71" font-size="3.9" fill="#1a1a1a" stroke="#1a1a1a" stroke-width="0.09" textLength="27.72" lengthAdjust="spacingAndGlyphs" transform="rotate(0.1 76.90 209.71)">GPU1: Ядро ГП</text>
<text x="131.50" y="209.71" font-size="3.9" fill="#1a1a1a" stroke="#1a1a1a" stroke-width="0.09" textLength="12.75" lengthAdjust="spacingAndGlyphs" transform="rotate(0.1 131.50 209.71)">0.800 V</text>
<rect x="70.75" y="212.64" width="4.90" height="3.04" fill="url(#gm)" rx="0.3"/>
<rect x="72.71" y="215.68" width="0.98" height="0.59" fill="#9ab8d0"/>
<rect x="71.73" y="216.17" width="2.94" height="0.49" fill="#8fb0cc"/>
<text x="76.90" y="215.91" font-size="3.9" fill="#1a1a1a" stroke="#1a1a1a" stroke-width="0.09" textLength="27.86" lengthAdjust="spacingAndGlyphs" transform="rotate(0.1 76.90 215.91)">GPU1: GPU PCIe</text>
<text x="131.50" y="215.91" font-size="3.9" fill="#1a1a1a" stroke="#1a1a1a" stroke-width="0.09" textLength="14.85" lengthAdjust="spacingAndGlyphs" transform="rotate(0.1 131.50 215.91)">11.732 V</text>
<rect x="70.75" y="218.84" width="4.90" height="3.04" fill="url(#gm)" rx="0.3"/>
<rect x="72.71" y="221.88" width="0.98" height="0.59" fill="#9ab8d0"/>
<rect x="71.73" y="222.37" width="2.94" height="0.49" fill="#8fb0cc"/>
<text x="76.90" y="222.11" font-size="3.9" fill="#1a1a1a" stroke="#1a1a1a" stroke-width="0.09" textLength="37.75" lengthAdjust="spacingAndGlyphs" transform="rotate(0.1 76.90 222.11)">GPU1: GPU 12VHPWR</text>
<text x="131.50" y="222.11" font-size="3.9" fill="#1a1a1a" stroke="#1a1a1a" stroke-width="0.09" textLength="14.85" lengthAdjust="spacingAndGlyphs" transform="rotate(0.1 131.50 222.11)">11.867 V</text>
<rect x="70.75" y="225.04" width="4.90" height="3.04" fill="url(#gm)" rx="0.3"/>
<rect x="72.71" y="228.08" width="0.98" height="0.59" fill="#9ab8d0"/>
<rect x="71.73" y="228.57" width="2.94" height="0.49" fill="#8fb0cc"/>
<text x="76.90" y="228.31" font-size="3.9" fill="#1a1a1a" stroke="#1a1a1a" stroke-width="0.09" textLength="27.72" lengthAdjust="spacingAndGlyphs" transform="rotate(0.1 76.90 228.31)">GPU2: Ядро ГП</text>
<text x="131.50" y="228.31" font-size="3.9" fill="#1a1a1a" stroke="#1a1a1a" stroke-width="0.09" textLength="12.75" lengthAdjust="spacingAndGlyphs" transform="rotate(0.1 131.50 228.31)">0.989 V</text>
<rect x="70.75" y="231.24" width="4.90" height="3.04" fill="url(#gm)" rx="0.3"/>
<rect x="72.71" y="234.28" width="0.98" height="0.59" fill="#9ab8d0"/>
<rect x="71.73" y="234.77" width="2.94" height="0.49" fill="#8fb0cc"/>
<text x="76.90" y="234.51" font-size="3.9" fill="#1a1a1a" stroke="#1a1a1a" stroke-width="0.09" textLength="26.95" lengthAdjust="spacingAndGlyphs" transform="rotate(0.1 76.90 234.51)">GPU2: GPU SoC</text>
<text x="131.50" y="234.51" font-size="3.9" fill="#1a1a1a" stroke="#1a1a1a" stroke-width="0.09" textLength="12.75" lengthAdjust="spacingAndGlyphs" transform="rotate(0.1 131.50 234.51)">1.194 V</text>
<ellipse cx="67.60" cy="245.60" rx="1.80" ry="1.80" fill="#fff8f0" stroke="#e8762a" stroke-width="0.9"/>
<ellipse cx="67.60" cy="245.60" rx="0.60" ry="0.60" fill="#e8762a"/>
<text x="71.40" y="246.91" font-size="3.9" fill="#1a1a1a" stroke="#1a1a1a" stroke-width="0.09" textLength="31.24" lengthAdjust="spacingAndGlyphs" transform="rotate(0.1 71.40 246.91)">Значення струму</text>
<rect x="70.75" y="249.84" width="4.90" height="3.04" fill="url(#gm)" rx="0.3"/>
<rect x="72.71" y="252.88" width="0.98" height="0.59" fill="#9ab8d0"/>
<rect x="71.73" y="253.37" width="2.94" height="0.49" fill="#8fb0cc"/>
<text x="76.90" y="253.11" font-size="3.9" fill="#1a1a1a" stroke="#1a1a1a" stroke-width="0.09" textLength="27.86" lengthAdjust="spacingAndGlyphs" transform="rotate(0.1 76.90 253.11)">GPU1: GPU PCIe</text>
<text x="131.50" y="253.11" font-size="3.9" fill="#1a1a1a" stroke="#1a1a1a" stroke-width="0.09" textLength="10.74" lengthAdjust="spacingAndGlyphs" transform="rotate(0.1 131.50 253.11)">0.22 A</text>
<rect x="70.75" y="256.04" width="4.90" height="3.04" fill="url(#gm)" rx="0.3"/>
<rect x="72.71" y="259.08" width="0.98" height="0.59" fill="#9ab8d0"/>
<rect x="71.73" y="259.57" width="2.94" height="0.49" fill="#8fb0cc"/>
<text x="76.90" y="259.31" font-size="3.9" fill="#1a1a1a" stroke="#1a1a1a" stroke-width="0.09" textLength="37.75" lengthAdjust="spacingAndGlyphs" transform="rotate(0.1 76.90 259.31)">GPU1: GPU 12VHPWR</text>
<text x="131.50" y="259.31" font-size="3.9" fill="#1a1a1a" stroke="#1a1a1a" stroke-width="0.09" textLength="10.74" lengthAdjust="spacingAndGlyphs" transform="rotate(0.1 131.50 259.31)">0.89 A</text>
<rect x="70.75" y="262.24" width="4.90" height="3.04" fill="url(#gm)" rx="0.3"/>
<rect x="72.71" y="265.28" width="0.98" height="0.59" fill="#9ab8d0"/>
<rect x="71.73" y="265.77" width="2.94" height="0.49" fill="#8fb0cc"/>
<text x="76.90" y="265.51" font-size="3.9" fill="#1a1a1a" stroke="#1a1a1a" stroke-width="0.09" textLength="26.95" lengthAdjust="spacingAndGlyphs" transform="rotate(0.1 76.90 265.51)">GPU2: GPU SoC</text>
<text x="131.50" y="265.51" font-size="3.9" fill="#1a1a1a" stroke="#1a1a1a" stroke-width="0.09" textLength="10.74" lengthAdjust="spacingAndGlyphs" transform="rotate(0.1 131.50 265.51)">9.00 A</text>
<ellipse cx="67.60" cy="276.60" rx="1.80" ry="1.80" fill="#fff8f0" stroke="#e8762a" stroke-width="0.9"/>
<ellipse cx="67.60" cy="276.60" rx="0.60" ry="0.60" fill="#e8762a"/>
<text x="71.40" y="277.91" font-size="3.9" fill="#1a1a1a" stroke="#1a1a1a" stroke-width="0.09" textLength="38.87" lengthAdjust="spacingAndGlyphs" transform="rotate(0.1 71.40 277.91)">Значення потужності</text>
<rect x="70.95" y="280.55" width="4.50" height="4.50" fill="#3c6e3c" rx="0.3"/>
<rect x="71.94" y="281.54" width="2.52" height="2.52" fill="#e4ece4"/>
<text x="76.90" y="284.11" font-size="3.9" fill="#1a1a1a" stroke="#1a1a1a" stroke-width="0.09" textLength="22.59" lengthAdjust="spacingAndGlyphs" transform="rotate(0.1 76.90 284.11)">CPU Package</text>
<text x="131.50" y="284.11" font-size="3.9" fill="#1a1a1a" stroke="#1a1a1a" stroke-width="0.09" textLength="13.97" lengthAdjust="spacingAndGlyphs" transform="rotate(0.1 131.50 284.11)">55.03 W</text>
<rect x="70.75" y="287.04" width="4.90" height="3.04" fill="url(#gm)" rx="0.3"/>
<rect x="72.71" y="290.08" width="0.98" height="0.59" fill="#9ab8d0"/>
<rect x="71.73" y="290.57" width="2.94" height="0.49" fill="#8fb0cc"/>
<text x="76.90" y="290.31" font-size="3.9" fill="#1a1a1a" stroke="#1a1a1a" stroke-width="0.09" textLength="49.97" lengthAdjust="spacingAndGlyphs" transform="rotate(0.1 76.90 290.31)">GPU1: Графічний процесор</text>
<text x="131.50" y="290.31" font-size="3.9" fill="#1a1a1a" stroke="#1a1a1a" stroke-width="0.09" textLength="13.97" lengthAdjust="spacingAndGlyphs" transform="rotate(0.1 131.50 290.31)">13.13 W</text>
<rect x="70.75" y="293.24" width="4.90" height="3.04" fill="url(#gm)" rx="0.3"/>
<rect x="72.71" y="296.28" width="0.98" height="0.59" fill="#9ab8d0"/>
<rect x="71.73" y="296.77" width="2.94" height="0.49" fill="#8fb0cc"/>
<text x="76.90" y="296.51" font-size="3.9" fill="#1a1a1a" stroke="#1a1a1a" stroke-width="0.09" textLength="30.34" lengthAdjust="spacingAndGlyphs" transform="rotate(0.1 76.90 296.51)">GPU1: GPU TDP%</text>
<text x="131.50" y="296.51" font-size="3.9" fill="#1a1a1a" stroke="#1a1a1a" stroke-width="0.09" textLength="5.29" lengthAdjust="spacingAndGlyphs" transform="rotate(0.1 131.50 296.51)">4%</text>
<rect x="70.75" y="299.44" width="4.90" height="3.04" fill="url(#gm)" rx="0.3"/>
<rect x="72.71" y="302.48" width="0.98" height="0.59" fill="#9ab8d0"/>
<rect x="71.73" y="302.97" width="2.94" height="0.49" fill="#8fb0cc"/>
<text x="76.90" y="302.71" font-size="3.9" fill="#1a1a1a" stroke="#1a1a1a" stroke-width="0.09" textLength="27.86" lengthAdjust="spacingAndGlyphs" transform="rotate(0.1 76.90 302.71)">GPU1: GPU PCIe</text>
<text x="131.50" y="302.71" font-size="3.9" fill="#1a1a1a" stroke="#1a1a1a" stroke-width="0.09" textLength="11.87" lengthAdjust="spacingAndGlyphs" transform="rotate(0.1 131.50 302.71)">2.56 W</text>
<rect x="70.75" y="305.64" width="4.90" height="3.04" fill="url(#gm)" rx="0.3"/>
<rect x="72.71" y="308.68" width="0.98" height="0.59" fill="#9ab8d0"/>
<rect x="71.73" y="309.17" width="2.94" height="0.49" fill="#8fb0cc"/>
<text x="76.90" y="308.91" font-size="3.9" fill="#1a1a1a" stroke="#1a1a1a" stroke-width="0.09" textLength="37.75" lengthAdjust="spacingAndGlyphs" transform="rotate(0.1 76.90 308.91)">GPU1: GPU 12VHPWR</text>
<text x="131.50" y="308.91" font-size="3.9" fill="#1a1a1a" stroke="#1a1a1a" stroke-width="0.09" textLength="13.97" lengthAdjust="spacingAndGlyphs" transform="rotate(0.1 131.50 308.91)">10.56 W</text>
<rect x="70.75" y="311.84" width="4.90" height="3.04" fill="url(#gm)" rx="0.3"/>
<rect x="72.71" y="314.88" width="0.98" height="0.59" fill="#9ab8d0"/>
<rect x="71.73" y="315.37" width="2.94" height="0.49" fill="#8fb0cc"/>
<text x="76.90" y="315.11" font-size="3.9" fill="#1a1a1a" stroke="#1a1a1a" stroke-width="0.09" textLength="49.97" lengthAdjust="spacingAndGlyphs" transform="rotate(0.1 76.90 315.11)">GPU2: Графічний процесор</text>
<text x="131.50" y="315.11" font-size="3.9" fill="#1a1a1a" stroke="#1a1a1a" stroke-width="0.09" textLength="13.97" lengthAdjust="spacingAndGlyphs" transform="rotate(0.1 131.50 315.11)">56.00 W</text>
<rect x="70.75" y="318.04" width="4.90" height="3.04" fill="url(#gm)" rx="0.3"/>
<rect x="72.71" y="321.08" width="0.98" height="0.59" fill="#9ab8d0"/>
<rect x="71.73" y="321.57" width="2.94" height="0.49" fill="#8fb0cc"/>
<text x="76.90" y="321.31" font-size="3.9" fill="#1a1a1a" stroke="#1a1a1a" stroke-width="0.09" textLength="26.95" lengthAdjust="spacingAndGlyphs" transform="rotate(0.1 76.90 321.31)">GPU2: GPU SoC</text>
<text x="131.50" y="321.31" font-size="3.9" fill="#1a1a1a" stroke="#1a1a1a" stroke-width="0.09" textLength="13.97" lengthAdjust="spacingAndGlyphs" transform="rotate(0.1 131.50 321.31)">10.00 W</text>
</svg>
<div id="shadow"></div>
<svg width="835" height="470" viewBox="0 0 835 470" font-family="Liberation Sans, sans-serif">
<rect x="202.30" y="51.60" width="560.00" height="370.00" fill="#f0f0f0" rx="1.8" stroke="#c4c4c4" stroke-width="0.3"/>
<path d="M202.3 60.900000000000006V53.4Q202.3 51.6 204.10000000000002 51.6H760.5Q762.3 51.6 762.3 53.4V60.900000000000006Z" fill="#fbf2e8"/>
<g transform="translate(205.00 54.10) scale(0.460)"><path d="M5 0.3 C6.5 2.5 8.8 3.6 8.6 6.5 C8.5 8.6 6.8 9.8 5 9.8 C3 9.8 1.3 8.5 1.4 6.3 C1.5 4.8 2.5 4.2 2.9 3 C3.6 3.8 3.8 4.4 4 5 C4.8 3.6 5.2 2 5 0.3Z" fill="#f58a1f"/><path d="M5 5.2 C6 6.3 6.6 7.2 6.3 8.3 C6.1 9.2 5.5 9.6 5 9.6 C4.3 9.6 3.7 9.1 3.7 8.2 C3.7 7 4.6 6.5 5 5.2Z" fill="#ffd23c"/></g>
<text x="211.90" y="57.81" font-size="3.9" fill="#222" stroke="#222" stroke-width="0.09" textLength="51.95" lengthAdjust="spacingAndGlyphs" transform="rotate(0.1 211.90 57.81)">System Stability Test - AIDA64</text>
<rect x="723.20" y="56.05" width="3.30" height="0.50" fill="#2a2a2a"/>
<rect x="738.40" y="54.70" width="3.10" height="3.10" fill="none" rx="0.6" stroke="#2a2a2a" stroke-width="0.52"/>
<path d="M753.1 54.6L756.4 57.9M756.4 54.6L753.1 57.9" fill="none" stroke="#2a2a2a" stroke-width="0.55"/>
<rect x="207.75" y="66.90" width="4.50" height="4.50" fill="#3c6e3c" rx="0.3"/>
<rect x="208.74" y="67.89" width="2.52" height="2.52" fill="#e4ece4"/>
<rect x="215.40" y="67.15" width="4.00" height="4.00" fill="#0a64c0" rx="0.7"/>
<path d="M216.40 69.25L217.10 69.95L218.50 68.35" fill="none" stroke="#fff" stroke-width="0.5"/>
<text x="220.50" y="70.46" font-size="3.9" fill="#111" stroke="#111" stroke-width="0.09" textLength="18.45" lengthAdjust="spacingAndGlyphs" transform="rotate(0.1 220.50 70.46)">Stress CPU</text>
<rect x="207.75" y="73.52" width="4.50" height="4.50" fill="#5a7a5a" rx="0.3"/>
<rect x="208.70" y="74.47" width="2.60" height="2.60" fill="#b8c8b8"/>
<rect x="215.40" y="73.77" width="4.00" height="4.00" fill="#0a64c0" rx="0.7"/>
<path d="M216.40 75.87L217.10 76.57L218.50 74.97" fill="none" stroke="#fff" stroke-width="0.5"/>
<text x="220.50" y="77.08" font-size="3.9" fill="#111" stroke="#111" stroke-width="0.09" textLength="17.94" lengthAdjust="spacingAndGlyphs" transform="rotate(0.1 220.50 77.08)">Stress FPU</text>
<rect x="208.40" y="79.99" width="3.20" height="4.80" fill="#3a3a3a" rx="0.3"/>
<rect x="209.30" y="81.19" width="1.40" height="2.40" fill="#6a6a6a"/>
<rect x="215.40" y="80.39" width="4.00" height="4.00" fill="#0a64c0" rx="0.7"/>
<path d="M216.40 82.49L217.10 83.19L218.50 81.59" fill="none" stroke="#fff" stroke-width="0.5"/>
<text x="220.50" y="83.70" font-size="3.9" fill="#111" stroke="#111" stroke-width="0.09" textLength="21.00" lengthAdjust="spacingAndGlyphs" transform="rotate(0.1 220.50 83.70)">Stress cache</text>
<rect x="207.50" y="87.86" width="5.00" height="2.30" fill="#2f7a46" rx="0.2"/>
<rect x="208.00" y="88.36" width="4.00" height="0.90" fill="#1d4d30"/>
<rect x="215.40" y="87.01" width="4.00" height="4.00" fill="#0a64c0" rx="0.7"/>
<path d="M216.40 89.11L217.10 89.81L218.50 88.21" fill="none" stroke="#fff" stroke-width="0.5"/>
<text x="220.50" y="90.32" font-size="3.9" fill="#111" stroke="#111" stroke-width="0.09" textLength="38.46" lengthAdjust="spacingAndGlyphs" transform="rotate(0.1 220.50 90.32)">Stress system memory</text>
<rect x="207.70" y="95.98" width="4.60" height="1.10" fill="#3a3a3a" rx="0.2"/>
<rect x="215.55" y="93.78" width="3.70" height="3.70" fill="#fff" rx="0.7" stroke="#9a9a9a" stroke-width="0.35"/>
<text x="220.50" y="96.94" font-size="3.9" fill="#111" stroke="#111" stroke-width="0.09" textLength="28.68" lengthAdjust="spacingAndGlyphs" transform="rotate(0.1 220.50 96.94)">Stress local disks</text>
<rect x="207.55" y="100.29" width="4.90" height="3.04" fill="url(#gm)" rx="0.3"/>
<rect x="209.51" y="103.33" width="0.98" height="0.59" fill="#9ab8d0"/>
<rect x="208.53" y="103.82" width="2.94" height="0.49" fill="#8fb0cc"/>
<rect x="208.20" y="102.35" width="3.60" height="1.00" fill="#5aa04a"/>
<rect x="215.55" y="100.40" width="3.70" height="3.70" fill="#fff" rx="0.7" stroke="#9a9a9a" stroke-width="0.35"/>
<text x="220.50" y="103.56" font-size="3.9" fill="#111" stroke="#111" stroke-width="0.09" textLength="22.72" lengthAdjust="spacingAndGlyphs" transform="rotate(0.1 220.50 103.56)">Stress GPU(s)</text>
<rect x="266.90" y="66.30" width="143.90" height="37.40" fill="#fff" stroke="#adb2b8" stroke-width="0.4"/>
<text x="269.20" y="72.41" font-size="3.9" fill="#222" stroke="#222" stroke-width="0.09" textLength="20.13" lengthAdjust="spacingAndGlyphs" transform="rotate(0.1 269.20 72.41)">Date / Time</text>
<text x="318.00" y="72.41" font-size="3.9" fill="#222" stroke="#222" stroke-width="0.09" textLength="10.56" lengthAdjust="spacingAndGlyphs" transform="rotate(0.1 318.00 72.41)">Status</text>
<rect x="316.40" y="66.80" width="0.30" height="36.50" fill="#ececec"/>
<rect x="404.20" y="66.80" width="0.30" height="36.50" fill="#ececec"/>
<rect x="267.30" y="75.00" width="143.00" height="0.30" fill="#f0f0f0"/>
<rect x="267.30" y="80.75" width="143.00" height="0.30" fill="#f0f0f0"/>
<rect x="267.30" y="86.50" width="143.00" height="0.30" fill="#f0f0f0"/>
<rect x="267.30" y="92.25" width="143.00" height="0.30" fill="#f0f0f0"/>
<rect x="267.30" y="98.00" width="143.00" height="0.30" fill="#f0f0f0"/>
<rect x="267.40" y="75.30" width="136.70" height="5.30" fill="#d9d9d9"/>
<text x="269.40" y="79.49" font-size="3.7" fill="#111" stroke="#111" stroke-width="0.09" textLength="32.15" lengthAdjust="spacingAndGlyphs" transform="rotate(0.1 269.40 79.49)">16.02.2026 13:39:47</text>
<text x="318.00" y="79.54" font-size="3.85" fill="#111" stroke="#111" stroke-width="0.09" textLength="35.67" lengthAdjust="spacingAndGlyphs" transform="rotate(0.1 318.00 79.54)">Stability Test: Started</text>
<rect x="209.00" y="108.60" width="26.40" height="8.40" fill="#fff" stroke="#d0d0d0" stroke-width="0.3"/>
<text x="210.60" y="113.41" font-size="3.9" fill="#111" stroke="#111" stroke-width="0.09" textLength="23.71" lengthAdjust="spacingAndGlyphs" transform="rotate(0.1 210.60 113.41)">Temperatures</text>
<text x="237.60" y="113.41" font-size="3.9" fill="#111" stroke="#111" stroke-width="0.09" textLength="22.19" lengthAdjust="spacingAndGlyphs" transform="rotate(0.1 237.60 113.41)">Cooling Fans</text>
<text x="264.00" y="113.41" font-size="3.9" fill="#111" stroke="#111" stroke-width="0.09" textLength="14.94" lengthAdjust="spacingAndGlyphs" transform="rotate(0.1 264.00 113.41)">Voltages</text>
<text x="282.00" y="113.41" font-size="3.9" fill="#111" stroke="#111" stroke-width="0.09" textLength="12.34" lengthAdjust="spacingAndGlyphs" transform="rotate(0.1 282.00 113.41)">Powers</text>
<text x="298.20" y="113.41" font-size="3.9" fill="#111" stroke="#111" stroke-width="0.09" textLength="11.04" lengthAdjust="spacingAndGlyphs" transform="rotate(0.1 298.20 113.41)">Clocks</text>
<text x="314.00" y="113.41" font-size="3.9" fill="#111" stroke="#111" stroke-width="0.09" textLength="12.33" lengthAdjust="spacingAndGlyphs" transform="rotate(0.1 314.00 113.41)">Unified</text>
<text x="330.20" y="113.41" font-size="3.9" fill="#111" stroke="#111" stroke-width="0.09" textLength="15.02" lengthAdjust="spacingAndGlyphs" transform="rotate(0.1 330.20 113.41)">Statistics</text>
<rect x="208.80" y="116.80" width="547.30" height="136.80" fill="#000"/>
<path d="M225.40 126.55V244.55M229.50 126.55V244.55M232.76 126.55V244.55M236.02 126.55V244.55M239.28 126.55V244.55M242.54 126.55V244.55M245.79 126.55V244.55M249.05 126.55V244.55M252.31 126.55V244.55M255.57 126.55V244.55M258.83 126.55V244.55M262.09 126.55V244.55M265.35 126.55V244.55M268.61 126.55V244.55M271.87 126.55V244.55M275.13 126.55V244.55M278.38 126.55V244.55M281.64 126.55V244.55M284.90 126.55V244.55M288.16 126.55V244.55M291.42 126.55V244.55M294.68 126.55V244.55M297.94 126.55V244.55M301.20 126.55V244.55M304.46 126.55V244.55M307.72 126.55V244.55M310.98 126.55V244.55M314.23 126.55V244.55M317.49 126.55V244.55M320.75 126.55V244.55M324.01 126.55V244.55M327.27 126.55V244.55M330.53 126.55V244.55M333.79 126.55V244.55M337.05 126.55V244.55M340.31 126.55V244.55M343.57 126.55V244.55M346.82 126.55V244.55M350.08 126.55V244.55M353.34 126.55V244.55M356.60 126.55V244.55M359.86 126.55V244.55M363.12 126.55V244.55M366.38 126.55V244.55M369.64 126.55V244.55M372.90 126.55V244.55M376.16 126.55V244.55M379.41 126.55V244.55M382.67 126.55V244.55M385.93 126.55V244.55M389.19 126.55V244.55M392.45 126.55V244.55M395.71 126.55V244.55M398.97 126.55V244.55M402.23 126.55V244.55M405.49 126.55V244.55M408.75 126.55V244.55M412.00 126.55V244.55M415.26 126.55V244.55M418.52 126.55V244.55M421.78 126.55V244.55M425.04 126.55V244.55M428.30 126.55V244.55M431.56 126.55V244.55M434.82 126.55V244.55M438.08 126.55V244.55M441.34 126.55V244.55M444.59 126.55V244.55M447.85 126.55V244.55M451.11 126.55V244.55M454.37 126.55V244.55M457.63 126.55V244.55M460.89 126.55V244.55M464.15 126.55V244.55M467.41 126.55V244.55M470.67 126.55V244.55M473.93 126.55V244.55M477.18 126.55V244.55M480.44 126.55V244.55M483.70 126.55V244.55M486.96 126.55V244.55M490.22 126.55V244.55M493.48 126.55V244.55M496.74 126.55V244.55M500.00 126.55V244.55M503.26 126.55V244.55M506.52 126.55V244.55M509.77 126.55V244.55M513.03 126.55V244.55M516.29 126.55V244.55M519.55 126.55V244.55M522.81 126.55V244.55M526.07 126.55V244.55M529.33 126.55V244.55M532.59 126.55V244.55M535.85 126.55V244.55M539.11 126.55V244.55M542.36 126.55V244.55M545.62 126.55V244.55M548.88 126.55V244.55M552.14 126.55V244.55M555.40 126.55V244.55M558.66 126.55V244.55M561.92 126.55V244.55M565.18 126.55V244.55M568.44 126.55V244.55M571.70 126.55V244.55M574.95 126.55V244.55M578.21 126.55V244.55M581.47 126.55V244.55M584.73 126.55V244.55M587.99 126.55V244.55M591.25 126.55V244.55M594.51 126.55V244.55M597.77 126.55V244.55M601.03 126.55V244.55M604.29 126.55V244.55M607.54 126.55V244.55M610.80 126.55V244.55M614.06 126.55V244.55M617.32 126.55V244.55M620.58 126.55V244.55M623.84 126.55V244.55M627.10 126.55V244.55M630.36 126.55V244.55M633.62 126.55V244.55M636.88 126.55V244.55M640.13 126.55V244.55M643.39 126.55V244.55M646.65 126.55V244.55M649.91 126.55V244.55M653.17 126.55V244.55M656.43 126.55V244.55M659.69 126.55V244.55M662.95 126.55V244.55M666.21 126.55V244.55M669.47 126.55V244.55M672.72 126.55V244.55M675.98 126.55V244.55M679.24 126.55V244.55M682.50 126.55V244.55M685.76 126.55V244.55M689.02 126.55V244.55M692.28 126.55V244.55M695.54 126.55V244.55M698.80 126.55V244.55M702.06 126.55V244.55M705.31 126.55V244.55M708.57 126.55V244.55M711.83 126.55V244.55M715.09 126.55V244.55M718.35 126.55V244.55M721.61 126.55V244.55M724.87 126.55V244.55M728.13 126.55V244.55M731.39 126.55V244.55M734.65 126.55V244.55M737.90 126.55V244.55M739.10 126.55V244.55M225.40 126.55H739.10M225.40 138.35H739.10M225.40 150.15H739.10M225.40 161.95H739.10M225.40 173.75H739.10M225.40 185.55H739.10M225.40 197.35H739.10M225.40 209.15H739.10M225.40 220.95H739.10M225.40 232.75H739.10M225.40 244.55H739.10" fill="none" stroke="#005a00" stroke-width="0.58"/>
<path d="M706.7 126.55V244.55" fill="none" stroke="#5e5e5e" stroke-width="0.85" stroke-dasharray="0.9 0.6"/>
<path d="M686 189.1 L689.5 189.3 L691.5 190.2 L693 189.7 L694.5 190.8 L696.5 190.3 L698 191.2 L700 190.6 L702 191.4 L706.4 191.4 L707.6 189 L708.6 186.4 L716 186.2 L718 185.8 L720 186.3 L721.5 185.5 L723 186.3 L726 186.0 L739.2 186.0" fill="none" stroke="#9fb6c6" stroke-width="0.6"/>
<path d="M686 194.9 L706.6 195.2 L707.4 196.0 L729 196.0 L730 197.3 L739.2 197.3" fill="none" stroke="#9a7a3a" stroke-width="0.6"/>
<path d="M690.5 195.6 L706.4 195.8 L707.4 197.2 L727 197.3 L728 198.1 L739.2 198.1" fill="none" stroke="#c8c800" stroke-width="0.75"/>
<text x="740.60" y="186.91" font-size="3.6" fill="#b8d0e4" stroke="#b8d0e4" stroke-width="0.05" textLength="3.88" lengthAdjust="spacingAndGlyphs" transform="rotate(0.1 740.60 186.91)">50</text>
<text x="740.80" y="199.91" font-size="3.6" fill="#e0e000" stroke="#e0e000" stroke-width="0.05" textLength="3.88" lengthAdjust="spacingAndGlyphs" transform="rotate(0.1 740.80 199.91)">39</text>
<text x="745.40" y="198.31" font-size="3.6" fill="#d0b080" stroke="#d0b080" stroke-width="0.05" textLength="3.88" lengthAdjust="spacingAndGlyphs" transform="rotate(0.1 745.40 198.31)">40</text>
<text x="224.00" y="127.71" font-size="3.6" fill="#e8e8e8" text-anchor="end" stroke="#e8e8e8" stroke-width="0.04" textLength="9.40" lengthAdjust="spacingAndGlyphs" transform="rotate(0.1 224.00 127.71)">100°C</text>
<text x="224.00" y="245.61" font-size="3.6" fill="#e8e8e8" text-anchor="end" stroke="#e8e8e8" stroke-width="0.04" textLength="5.52" lengthAdjust="spacingAndGlyphs" transform="rotate(0.1 224.00 245.61)">0°C</text>
<text x="707.20" y="249.41" font-size="3.6" fill="#e0e0e0" text-anchor="end" stroke="#e0e0e0" stroke-width="0.04" textLength="13.21" lengthAdjust="spacingAndGlyphs" transform="rotate(0.1 707.20 249.41)">13:39:47</text>
<rect x="435.80" y="119.50" width="3.60" height="3.60" fill="#f4f4f4" rx="0.3"/>
<path d="M436.60 121.4l0.8 0.9l1.3 -1.7" fill="none" stroke="#222" stroke-width="0.5"/>
<text x="441.10" y="122.67" font-size="3.8" fill="#d8d800" stroke="#d8d800" stroke-width="0.09" textLength="22.33" lengthAdjust="spacingAndGlyphs" transform="rotate(0.1 441.10 122.67)">Motherboard</text>
<rect x="467.10" y="119.50" width="3.60" height="3.60" fill="#f4f4f4" rx="0.3"/>
<path d="M467.90 121.4l0.8 0.9l1.3 -1.7" fill="none" stroke="#222" stroke-width="0.5"/>
<text x="472.00" y="122.67" font-size="3.8" fill="#7f9fd0" stroke="#7f9fd0" stroke-width="0.09" textLength="7.10" lengthAdjust="spacingAndGlyphs" transform="rotate(0.1 472.00 122.67)">CPU</text>
<rect x="482.90" y="119.50" width="3.60" height="3.60" fill="#f4f4f4" rx="0.3"/>
<path d="M483.70 121.4l0.8 0.9l1.3 -1.7" fill="none" stroke="#222" stroke-width="0.5"/>
<text x="488.00" y="122.67" font-size="3.8" fill="#c0a070" stroke="#c0a070" stroke-width="0.09" textLength="37.57" lengthAdjust="spacingAndGlyphs" transform="rotate(0.1 488.00 122.67)">Samsung SSD 980 1TB</text>
<rect x="208.80" y="255.20" width="547.30" height="135.70" fill="#000"/>
<path d="M227.50 265.0V381.5M230.76 265.0V381.5M234.02 265.0V381.5M237.29 265.0V381.5M240.55 265.0V381.5M243.81 265.0V381.5M247.07 265.0V381.5M250.33 265.0V381.5M253.59 265.0V381.5M256.86 265.0V381.5M260.12 265.0V381.5M263.38 265.0V381.5M266.64 265.0V381.5M269.90 265.0V381.5M273.16 265.0V381.5M276.43 265.0V381.5M279.69 265.0V381.5M282.95 265.0V381.5M286.21 265.0V381.5M289.47 265.0V381.5M292.73 265.0V381.5M296.00 265.0V381.5M299.26 265.0V381.5M302.52 265.0V381.5M305.78 265.0V381.5M309.04 265.0V381.5M312.30 265.0V381.5M315.57 265.0V381.5M318.83 265.0V381.5M322.09 265.0V381.5M325.35 265.0V381.5M328.61 265.0V381.5M331.87 265.0V381.5M335.14 265.0V381.5M338.40 265.0V381.5M341.66 265.0V381.5M344.92 265.0V381.5M348.18 265.0V381.5M351.44 265.0V381.5M354.71 265.0V381.5M357.97 265.0V381.5M361.23 265.0V381.5M364.49 265.0V381.5M367.75 265.0V381.5M371.01 265.0V381.5M374.28 265.0V381.5M377.54 265.0V381.5M380.80 265.0V381.5M384.06 265.0V381.5M387.32 265.0V381.5M390.59 265.0V381.5M393.85 265.0V381.5M397.11 265.0V381.5M400.37 265.0V381.5M403.63 265.0V381.5M406.89 265.0V381.5M410.16 265.0V381.5M413.42 265.0V381.5M416.68 265.0V381.5M419.94 265.0V381.5M423.20 265.0V381.5M426.46 265.0V381.5M429.73 265.0V381.5M432.99 265.0V381.5M436.25 265.0V381.5M439.51 265.0V381.5M442.77 265.0V381.5M446.03 265.0V381.5M449.30 265.0V381.5M452.56 265.0V381.5M455.82 265.0V381.5M459.08 265.0V381.5M462.34 265.0V381.5M465.60 265.0V381.5M468.87 265.0V381.5M472.13 265.0V381.5M475.39 265.0V381.5M478.65 265.0V381.5M481.91 265.0V381.5M485.17 265.0V381.5M488.44 265.0V381.5M491.70 265.0V381.5M494.96 265.0V381.5M498.22 265.0V381.5M501.48 265.0V381.5M504.74 265.0V381.5M508.01 265.0V381.5M511.27 265.0V381.5M514.53 265.0V381.5M517.79 265.0V381.5M521.05 265.0V381.5M524.31 265.0V381.5M527.58 265.0V381.5M530.84 265.0V381.5M534.10 265.0V381.5M537.36 265.0V381.5M540.62 265.0V381.5M543.88 265.0V381.5M547.15 265.0V381.5M550.41 265.0V381.5M553.67 265.0V381.5M556.93 265.0V381.5M560.19 265.0V381.5M563.46 265.0V381.5M566.72 265.0V381.5M569.98 265.0V381.5M573.24 265.0V381.5M576.50 265.0V381.5M579.76 265.0V381.5M583.03 265.0V381.5M586.29 265.0V381.5M589.55 265.0V381.5M592.81 265.0V381.5M596.07 265.0V381.5M599.33 265.0V381.5M602.60 265.0V381.5M605.86 265.0V381.5M609.12 265.0V381.5M612.38 265.0V381.5M615.64 265.0V381.5M618.90 265.0V381.5M622.17 265.0V381.5M625.43 265.0V381.5M628.69 265.0V381.5M631.95 265.0V381.5M635.21 265.0V381.5M638.47 265.0V381.5M641.74 265.0V381.5M645.00 265.0V381.5M648.26 265.0V381.5M651.52 265.0V381.5M654.78 265.0V381.5M658.04 265.0V381.5M661.31 265.0V381.5M664.57 265.0V381.5M667.83 265.0V381.5M671.09 265.0V381.5M674.35 265.0V381.5M677.61 265.0V381.5M680.88 265.0V381.5M684.14 265.0V381.5M687.40 265.0V381.5M690.66 265.0V381.5M693.92 265.0V381.5M697.18 265.0V381.5M700.45 265.0V381.5M703.71 265.0V381.5M706.97 265.0V381.5M710.23 265.0V381.5M713.49 265.0V381.5M716.76 265.0V381.5M720.02 265.0V381.5M723.28 265.0V381.5M726.54 265.0V381.5M729.80 265.0V381.5M733.06 265.0V381.5M736.33 265.0V381.5M225.0 267.30H739.8M225.0 278.77H739.8M225.0 290.24H739.8M225.0 301.71H739.8M225.0 313.18H739.8M225.0 324.65H739.8M225.0 336.12H739.8M225.0 347.59H739.8M225.0 359.06H739.8M225.0 370.53H739.8M225.0 381.5H739.8" fill="none" stroke="#005a00" stroke-width="0.58"/>
<path d="M469.80 376.70 L470.10 376.59 L470.72 376.54 L471.34 376.69 L472.00 376.20 L472.58 375.97 L473.20 375.79 L474.00 375.50 L474.44 375.64 L475.06 375.41 L475.68 375.76 L476.00 375.80 L476.30 375.71 L476.92 375.44 L477.54 374.47 L478.00 374.50 L478.78 370.37 L479.40 368.00 L480.02 357.57 L480.40 352.90 L480.64 357.20 L481.30 366.00 L481.88 367.95 L482.50 369.00 L483.12 370.91 L483.50 374.00 L483.74 375.97 L484.36 377.79 L485.00 378.50 L485.60 376.20 L486.00 374.00 L486.22 373.86 L486.84 371.43 L487.50 371.00 L488.08 363.15 L488.60 358.50 L489.32 368.29 L489.60 372.00 L489.94 367.45 L490.56 361.59 L490.80 360.00 L491.18 364.65 L491.80 374.00 L492.42 363.35 L492.80 358.80 L493.04 361.63 L493.80 371.00 L494.28 372.45 L495.00 375.00 L495.52 376.41 L496.14 376.19 L496.50 376.50 L496.76 376.08 L497.38 373.86 L498.00 372.00 L498.62 364.93 L499.20 357.50 L499.86 358.71 L500.20 359.50 L500.48 362.70 L501.20 373.00 L501.72 377.54 L502.00 378.00 L502.34 377.48 L502.96 373.76 L503.50 370.00 L504.20 372.41 L505.00 374.00 L505.44 372.64 L506.06 371.18 L506.50 371.00 L507.30 361.22 L507.80 356.00 L508.70 348.20 L509.16 352.72 L509.50 358.00 L509.78 354.03 L510.60 339.70 L511.02 349.85 L511.50 362.00 L512.26 367.05 L512.60 368.00 L512.88 365.46 L513.60 360.00 L514.12 367.55 L514.50 371.00 L514.74 370.59 L515.36 365.01 L515.60 365.00 L515.98 361.12 L516.50 357.60 L517.22 369.03 L517.50 372.00 L517.84 373.28 L518.50 376.00 L519.08 374.13 L519.80 369.00 L520.32 365.27 L521.00 361.00 L521.56 363.00 L521.90 366.00 L522.18 362.60 L522.80 354.00 L523.42 365.75 L523.70 370.00 L524.04 370.71 L524.66 372.62 L525.00 375.00 L525.28 375.12 L525.90 378.01 L526.50 378.00 L527.14 376.11 L527.76 371.97 L528.00 372.00 L528.38 370.33 L529.00 368.30 L529.50 368.00 L530.24 356.50 L530.50 354.00 L530.86 361.07 L531.30 368.00 L532.10 370.50 L532.50 373.00 L532.72 372.64 L533.34 370.90 L534.00 369.50 L534.58 369.66 L535.20 372.10 L535.50 372.00 L535.82 370.61 L536.44 371.12 L537.00 370.00 L537.68 370.59 L538.50 373.50 L538.92 372.45 L539.54 370.67 L540.00 370.50 L540.78 371.20 L541.50 373.00 L542.02 373.53 L542.64 372.27 L543.00 371.00 L543.26 371.01 L543.88 373.76 L544.50 374.00 L545.12 372.21 L545.74 371.66 L546.00 371.50 L546.36 373.02 L546.98 373.50 L547.50 374.00 L548.22 370.80 L549.00 369.50 L549.46 373.76 L550.00 376.00 L550.70 375.78 L551.32 376.36 L552.00 377.50 L552.56 377.51 L553.18 375.58 L554.00 375.00 L554.42 373.63 L555.04 371.81 L555.50 372.00 L556.28 373.01 L557.00 376.00 L557.52 376.74 L558.14 376.47 L558.76 378.02 L559.00 378.00 L559.38 377.95 L560.00 378.63 L560.62 380.41 L561.00 379.50 L561.24 379.04 L561.86 378.19 L562.48 377.86 L563.00 376.00 L563.72 375.72 L564.34 376.11 L565.00 377.50 L565.58 377.98 L566.20 377.13 L567.00 375.50 L567.44 375.40 L568.06 376.02 L568.68 378.22 L569.00 378.00 L569.30 378.92 L569.92 376.52 L570.54 378.02 L571.00 376.50 L571.78 377.01 L572.60 375.50 L573.60 372.00 L574.10 352.00" fill="none" stroke="#c8c400" stroke-width="0.55" stroke-linejoin="round"/>
<path d="M574.1 352.5L574.25 265.45H739.1" fill="none" stroke="#c4bc00" stroke-width="0.46"/>
<text x="224.10" y="266.51" font-size="3.6" fill="#e8e8e8" text-anchor="end" stroke="#e8e8e8" stroke-width="0.04" textLength="8.77" lengthAdjust="spacingAndGlyphs" transform="rotate(0.1 224.10 266.51)">100%</text>
<text x="224.10" y="383.11" font-size="3.6" fill="#e8e8e8" text-anchor="end" stroke="#e8e8e8" stroke-width="0.04" textLength="4.89" lengthAdjust="spacingAndGlyphs" transform="rotate(0.1 224.10 383.11)">0%</text>
<text x="740.90" y="266.61" font-size="3.6" fill="#d8d000" stroke="#d8d000" stroke-width="0.04" textLength="8.77" lengthAdjust="spacingAndGlyphs" transform="rotate(0.1 740.90 266.61)">100%</text>
<text x="482.30" y="261.51" font-size="3.6" fill="#e8e8e8" text-anchor="middle" stroke="#e8e8e8" stroke-width="0.09" textLength="17.54" lengthAdjust="spacingAndGlyphs" transform="rotate(0.1 482.30 261.51)">CPU Usage</text>
<text x="381.00" y="402.61" font-size="3.9" fill="#111" stroke="#111" stroke-width="0.09" textLength="32.38" lengthAdjust="spacingAndGlyphs" transform="rotate(0.1 381.00 402.61)">Remaining Battery:</text>
<rect x="417.30" y="397.30" width="26.50" height="8.10" fill="#000"/>
<text x="430.55" y="402.51" font-size="3.6" fill="#00c800" text-anchor="middle" stroke="#00c800" stroke-width="0.08" textLength="17.05" lengthAdjust="spacingAndGlyphs" transform="rotate(0.1 430.55 402.51)">No battery</text>
<text x="451.50" y="402.61" font-size="3.9" fill="#111" stroke="#111" stroke-width="0.09" textLength="21.36" lengthAdjust="spacingAndGlyphs" transform="rotate(0.1 451.50 402.61)">Test Started:</text>
<rect x="476.00" y="397.30" width="46.30" height="8.10" fill="#000"/>
<text x="499.20" y="402.51" font-size="3.6" fill="#00c800" text-anchor="middle" stroke="#00c800" stroke-width="0.08" textLength="31.28" lengthAdjust="spacingAndGlyphs" transform="rotate(0.1 499.20 402.51)">16.02.2026 13:39:47</text>
<text x="530.00" y="402.61" font-size="3.9" fill="#111" stroke="#111" stroke-width="0.09" textLength="23.50" lengthAdjust="spacingAndGlyphs" transform="rotate(0.1 530.00 402.61)">Elapsed Time:</text>
<rect x="557.30" y="397.30" width="26.70" height="8.10" fill="#000"/>
<text x="570.60" y="402.51" font-size="3.6" fill="#00c800" text-anchor="middle" stroke="#00c800" stroke-width="0.08" textLength="13.21" lengthAdjust="spacingAndGlyphs" transform="rotate(0.1 570.60 402.51)">00:09:13</text>
<rect x="207.80" y="410.00" width="23.20" height="6.20" fill="#f7f7f7" rx="0.8" stroke="#e6e6e6" stroke-width="0.3"/>
<text x="219.40" y="414.41" font-size="3.9" fill="#a8a8a8" text-anchor="middle" stroke="#a8a8a8" stroke-width="0.04" textLength="8.06" lengthAdjust="spacingAndGlyphs" transform="rotate(0.1 219.40 414.41)"><tspan text-decoration="underline">S</tspan>tart</text>
<rect x="234.40" y="410.00" width="23.40" height="6.20" fill="#fdfdfd" rx="0.8" stroke="#2a78d0" stroke-width="0.5"/>
<text x="246.10" y="414.41" font-size="3.9" fill="#111" text-anchor="middle" stroke="#111" stroke-width="0.04" textLength="7.97" lengthAdjust="spacingAndGlyphs" transform="rotate(0.1 246.10 414.41)">S<tspan text-decoration="underline">t</tspan>op</text>
<rect x="266.70" y="410.00" width="23.50" height="6.20" fill="#fdfdfd" rx="0.8" stroke="#d0d0d0" stroke-width="0.35"/>
<text x="278.45" y="414.41" font-size="3.9" fill="#111" text-anchor="middle" stroke="#111" stroke-width="0.04" textLength="8.74" lengthAdjust="spacingAndGlyphs" transform="rotate(0.1 278.45 414.41)">Cl<tspan text-decoration="underline">e</tspan>ar</text>
<rect x="293.10" y="410.00" width="23.20" height="6.20" fill="#fdfdfd" rx="0.8" stroke="#d0d0d0" stroke-width="0.35"/>
<text x="304.70" y="414.41" font-size="3.9" fill="#111" text-anchor="middle" stroke="#111" stroke-width="0.04" textLength="7.96" lengthAdjust="spacingAndGlyphs" transform="rotate(0.1 304.70 414.41)">S<tspan text-decoration="underline">a</tspan>ve</text>
<rect x="325.40" y="410.00" width="23.00" height="6.20" fill="#fdfdfd" rx="0.8" stroke="#d0d0d0" stroke-width="0.35"/>
<text x="336.90" y="414.41" font-size="3.9" fill="#111" text-anchor="middle" stroke="#111" stroke-width="0.04" textLength="11.06" lengthAdjust="spacingAndGlyphs" transform="rotate(0.1 336.90 414.41)">CPU<tspan text-decoration="underline">I</tspan>D</text>
<rect x="352.00" y="410.00" width="23.20" height="6.20" fill="#fdfdfd" rx="0.8" stroke="#d0d0d0" stroke-width="0.35"/>
<text x="363.60" y="414.41" font-size="3.9" fill="#111" text-anchor="middle" stroke="#111" stroke-width="0.04" textLength="19.95" lengthAdjust="spacingAndGlyphs" transform="rotate(0.1 363.60 414.41)"><tspan text-decoration="underline">P</tspan>references</text>
<rect x="733.10" y="410.00" width="22.90" height="6.20" fill="#f7f7f7" rx="0.8" stroke="#e6e6e6" stroke-width="0.3"/>
<text x="744.55" y="414.41" font-size="3.9" fill="#a8a8a8" text-anchor="middle" stroke="#a8a8a8" stroke-width="0.04" textLength="9.34" lengthAdjust="spacingAndGlyphs" transform="rotate(0.1 744.55 414.41)"><tspan text-decoration="underline">C</tspan>lose</text>
</svg>
</body></html>
